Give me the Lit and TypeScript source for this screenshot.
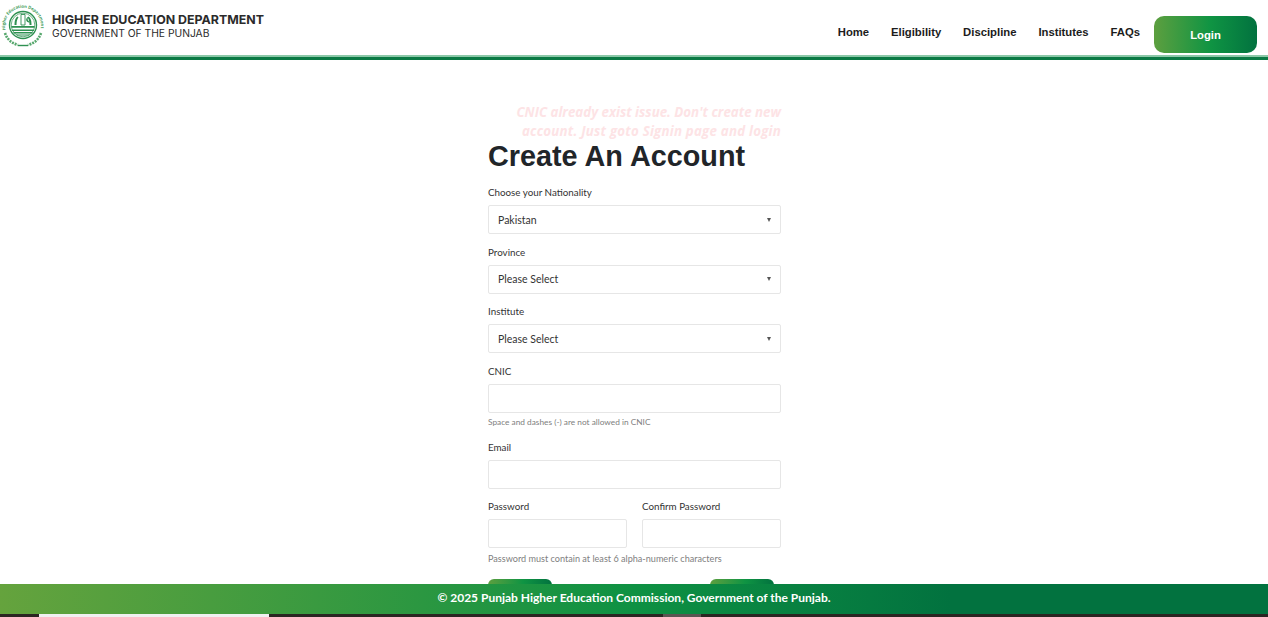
import { LitElement, html, css } from "lit";
import { customElement } from "lit/decorators.js";

@customElement("app-root")
export class AppRoot extends LitElement {
  static styles = css`
    :host { display: block; position: relative; height: 617px; overflow: hidden; background: #fff; font-family: "Lato", sans-serif; color: #212529; }
    * { box-sizing: border-box; }
    header { height: 60px; border-bottom: 3px solid #0b7a45; box-shadow: inset 0 -2px 0 #8cc8a8; display: flex; justify-content: space-between; }
    .brand { display: flex; gap: 6px; align-items: flex-start; padding-top: 2px; }
    .brand svg { width: 46px; height: 46px; display: block; }
    .brand-text { padding-top: 11px; font-family: "Inter", sans-serif; color: #2b2b2b; }
    .brand-text b { display: block; font-size: 12.4px; line-height: 14px; font-weight: 700; white-space: nowrap; }
    .brand-text span { display: block; font-size: 10.3px; line-height: 13px; font-weight: 400; white-space: nowrap; }
    nav { display: flex; align-items: flex-start; padding: 16px 11px 0 0; font-family: "Liberation Sans", sans-serif; font-weight: 700; font-size: 11.3px; color: #1c1c1c; }
    nav a { display: block; margin-right: 21.9px; line-height: 14px; padding-top: 9px; white-space: nowrap; }
    nav a.faq { margin-right: 14px; }
    .login { width: 103px; height: 37px; border-radius: 10px; background: linear-gradient(90deg, #5d9f3f 0%, #0f9443 55%, #02723f 100%); color: #fff; text-align: center; line-height: 38px; }
    main { width: 293px; margin-left: 488px; }
    .notice { margin-top: 43px; text-align: right; font-family: "Open Sans", sans-serif; font-weight: 700; font-style: italic; font-size: 13.3px; line-height: 19px; color: #fde3e5; white-space: nowrap; }
    .notice span { letter-spacing: .22px; }
    h1 { margin: 0; font: 700 28.8px/30px "Liberation Sans", sans-serif; color: #212529; }
    label { display: block; font-size: 9.8px; line-height: 14px; color: #333; white-space: nowrap; }
    .field { display: block; margin-bottom: 10.7px; }
    .field.cnic { margin-bottom: 11.7px; }
    .l1 { margin-top: 14px; }
    .box { display: flex; justify-content: space-between; align-items: center; height: 29px; border: 1px solid #e6e6e6; border-radius: 2px; margin-top: 6px; padding: 0 9px; font-size: 10.5px; color: #333; background: #fff; }
    .arrow { width: 0; height: 0; border-left: 2.5px solid transparent; border-right: 2.5px solid transparent; border-top: 4px solid #555; }
    .help { font-size: 9.1px; line-height: 12px; color: #808080; margin-top: 5px; white-space: nowrap; }
    .help.small { font-size: 8.3px; margin-top: 3px; }
    .two { display: grid; grid-template-columns: 139px 139px; gap: 15px; }
    .actions { display: flex; gap: 158px; margin-top: 14px; }
    .btn { width: 64px; height: 30px; border-radius: 6px; background: linear-gradient(90deg, #5d9f3f, #0f9443 55%, #02723f); }
    footer { position: absolute; left: 0; right: 0; top: 584px; height: 30px; background: linear-gradient(90deg, #65a33d 0%, #0e9143 50%, #02723f 75%, #02723f 100%); color: #fff; font-family: "Lato", sans-serif; font-size: 12px; font-weight: 700; line-height: 27px; text-align: center; }
    .strip { position: absolute; left: 0; right: 0; top: 614px; height: 3px; background: #2b2622; display: flex; }
    .w { margin-left: 39px; width: 230px; background: #f0f0f0; }
    .g { margin-left: 394px; width: 38px; background: #5a5652; }
  `;

  private logo() {
    return html`<svg viewBox="0 0 46 46" aria-hidden="true">
      <path id="ring" d="M7 32A18 18 0 1 1 39 32" fill="none" stroke="none"></path>
      <text font-family="Open Sans" font-size="4.2" font-weight="700" fill="#3d9a58"><textPath href="#ring" startOffset="6%">Higher Education Department</textPath></text>
      <circle cx="23" cy="23" r="13.5" fill="#fff" stroke="#2f9152" stroke-width="1.4"></circle>
      <circle cx="23" cy="23" r="11.8" fill="#fff" stroke="#2f9152" stroke-width=".7"></circle>
      <path d="M11.5 24h23v1.8h-23zM12 27.4h22v1.6H12zM13.5 30h19v1.4h-19zM16.5 32.5h13v1.1h-13z" fill="#2f9152"></path>
      <path d="M14.5 23c0-5 1-7 3-8.5l1 1c-1 1-2 3-2 7.500zM31.500 23c0-5-1-7-3-8.500l-1 1c1 1 2 3 2 7.500z" fill="#2f9152"></path>
      <path d="M21 12.500h4V23h-4z" fill="#fff" stroke="#2f9152" stroke-width=".9"></path>
      <path d="M29 15a2.800 2.800 0 1 0 2.300 4.300 2.400 2.400 0 0 1-2.300-4.300z" fill="#2f9152"></path>
      <path d="M5 31c2 6 6 10 13 12M41 31c-2 6-6 10-13 12" fill="none" stroke="#58a86e" stroke-width="2.600" stroke-dasharray="2 1"></path>
      <path d="M18 43.500h10" stroke="#2f9152" stroke-width="1.400"></path>
    </svg>`;
  }

  private select(name: string, value: string, cls = "") {
    return html`<div class="field ${cls}"><label>${name}</label><div class="box"><span>${value}</span><i class="arrow"></i></div></div>`;
  }

  render() {
    return html`
      <header>
        <div class="brand">${this.logo()}
          <div class="brand-text"><b>HIGHER EDUCATION DEPARTMENT</b><span>GOVERNMENT OF THE PUNJAB</span></div>
        </div>
        <nav>
          <a>Home</a><a>Eligibility</a><a>Discipline</a><a>Institutes</a><a class="faq">FAQs</a>
          <div class="login">Login</div>
        </nav>
      </header>
      <main>
        <div class="notice">CNIC already exist issue. Don't create new<br /><span>account. Just goto Signin page and login</span></div>
        <h1>Create An Account</h1>
        ${this.select("Choose your Nationality", "Pakistan", "l1")}
        ${this.select("Province", "Please Select")}
        ${this.select("Institute", "Please Select")}
        <div class="field cnic"><label>CNIC</label><div class="box"></div><div class="help small">Space and dashes (-) are not allowed in CNIC</div></div>
        <div class="field"><label>Email</label><div class="box"></div></div>
        <div class="two">
          <div><label>Password</label><div class="box"></div></div>
          <div><label>Confirm Password</label><div class="box"></div></div>
        </div>
        <div class="help">Password must contain at least 6 alpha-numeric characters</div>
        <div class="actions"><div class="btn"></div><div class="btn"></div></div>
      </main>
      <footer>© 2025 Punjab Higher Education Commission, Government of the Punjab.</footer>
      <div class="strip"><div class="w"></div><div class="g"></div></div>
    `;
  }
}
